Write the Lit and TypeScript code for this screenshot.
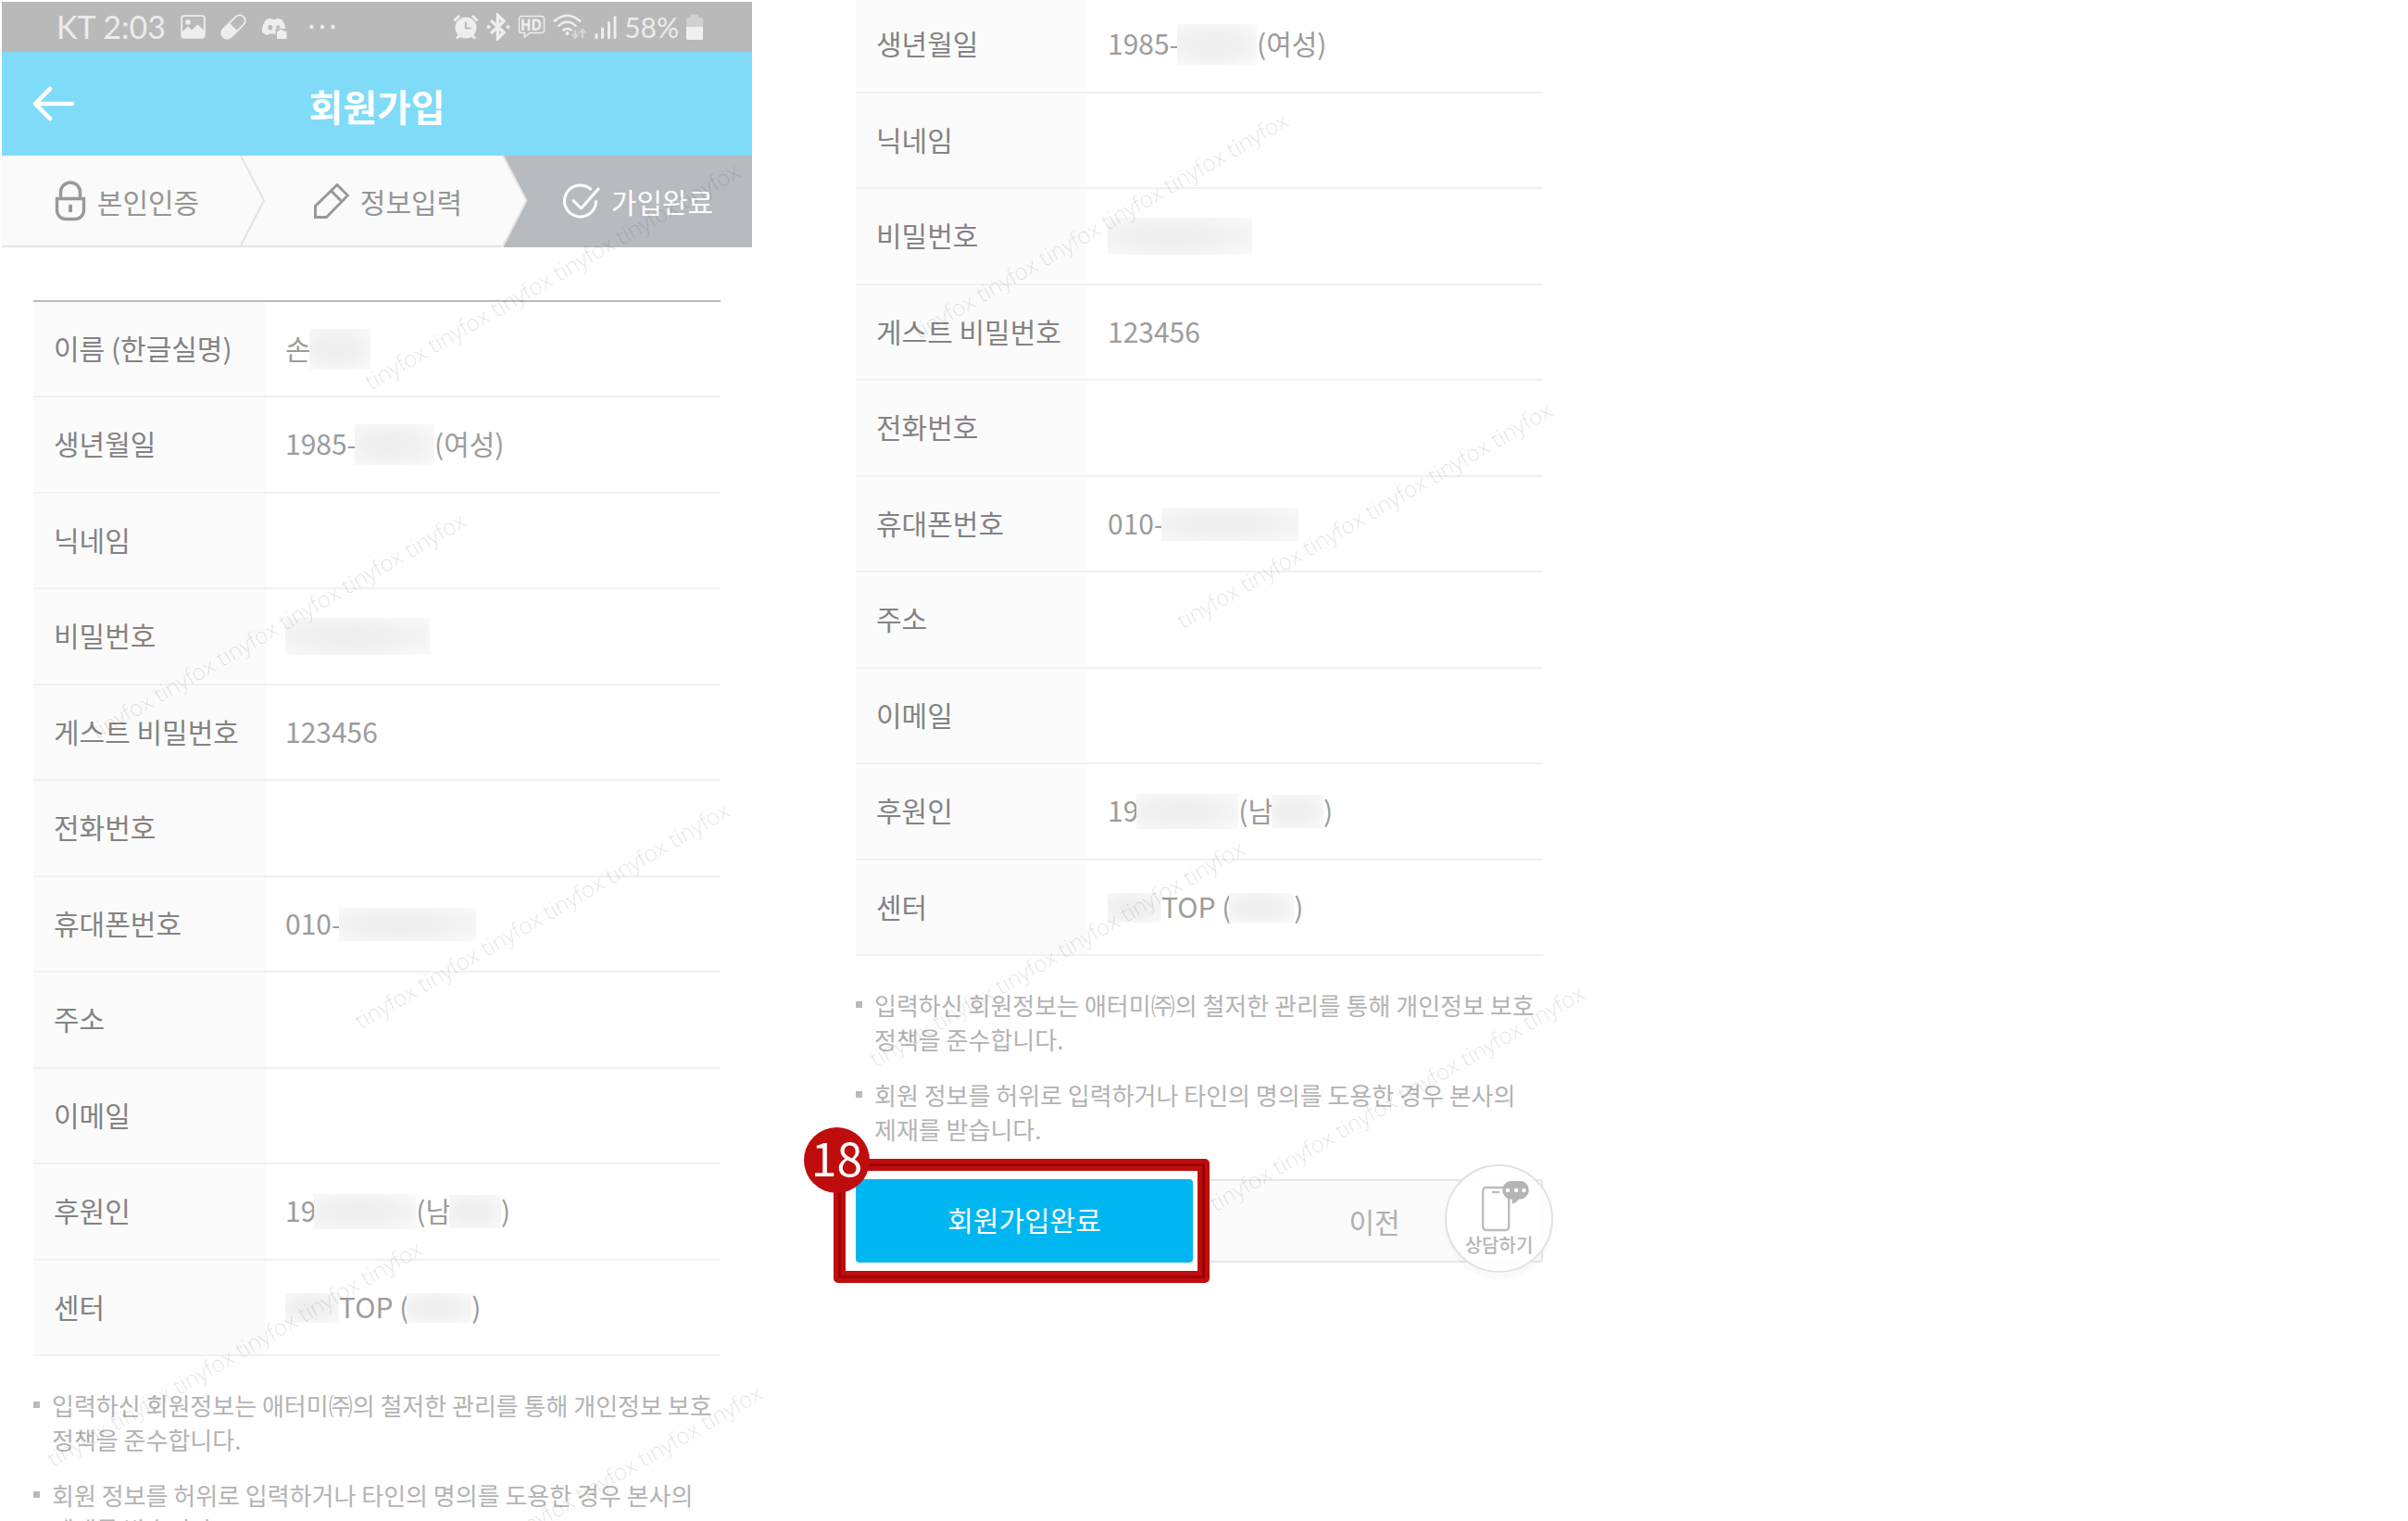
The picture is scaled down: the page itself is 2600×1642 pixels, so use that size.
import { LitElement, html, svg, css, nothing } from "lit";
import { customElement, property } from "lit/decorators.js";

/** A piece of a cell: plain text, or a masked block [width, height]. */
type Part = string | [number, number];
interface Row {
  label: string;
  value: Part[];
}

const ROWS: Row[] = [
  { label: "이름 (한글실명)", value: ["손", [66, 44]] },
  { label: "생년월일", value: ["1985-", [86, 44], "(여성)"] },
  { label: "닉네임", value: [] },
  { label: "비밀번호", value: [[156, 40]] },
  { label: "게스트 비밀번호", value: ["123456"] },
  { label: "전화번호", value: [] },
  { label: "휴대폰번호", value: ["010-", [148, 36]] },
  { label: "주소", value: [] },
  { label: "이메일", value: [] },
  { label: "후원인", value: ["19", [110, 38], "(남", [56, 36], ")"] },
  { label: "센터", value: [[58, 32], "TOP (", [70, 32], ")"] },
];

const NOTES = [
  "입력하신 회원정보는 애터미㈜의 철저한 관리를 통해 개인정보 보호 정책을 준수합니다.",
  "회원 정보를 허위로 입력하거나 타인의 명의를 도용한 경우 본사의 제재를 받습니다.",
];

const MARK = "tinyfox tinyfox tinyfox tinyfox tinyfox tinyfox";

const FONT = css`"Noto Sans CJK KR", "Noto Sans", sans-serif`;

@customElement("member-table")
class MemberTable extends LitElement {
  @property({ type: Number }) from = 0;

  static styles = css`
    :host { display: block; }
    table {
      width: 100%;
      border-collapse: separate;
      border-spacing: 0;
      table-layout: fixed;
      font: 400 30px/44px ${FONT};
    }
    .full { border-top: 2px solid #b7babf; }
    tr { height: 103px; }
    .tall { height: 104px; }
    th, td {
      box-sizing: border-box;
      padding: 0 0 4px 22px;
      border-bottom: 2px solid #f0f0f0;
      text-align: left;
      font-weight: 400;
      white-space: nowrap;
    }
    th { width: 250px; background: #fbfbfb; color: #838383; }
    td { color: #9c9c9c; }
    .value { display: flex; align-items: center; height: 44px; white-space: pre; }
    .mask {
      flex: none;
      margin: 4px 0 0 -2px;
      background: radial-gradient(ellipse at 45% 50%, #eeeeee 0%, #f1f1f1 45%, #fafafa 100%);
    }
    .mask:first-child { margin-left: 0; }
  `;

  render() {
    return html`
      <table class=${this.from === 0 ? "full" : ""}>
        <tbody>
          ${ROWS.map((row, i) =>
            i < this.from
              ? nothing
              : html`<tr class=${i % 2 ? "tall" : ""}>
                  <th scope="row">${row.label}</th>
                  <td>
                    <div class="value">${row.value.map((p) =>
                      typeof p === "string"
                        ? html`<span>${p}</span>`
                        : html`<span class="mask" style="width:${p[0]}px;height:${p[1]}px"></span>`
                    )}</div>
                  </td>
                </tr>`
          )}
        </tbody>
      </table>
    `;
  }
}

@customElement("member-notes")
class MemberNotes extends LitElement {
  static styles = css`
    :host { display: block; }
    ul {
      list-style: none;
      margin: 0;
      padding: 34px 0 0;
      display: grid;
      gap: 23px;
      font: 400 26px/37px ${FONT};
      color: #b3b3b3;
      word-break: keep-all;
    }
    li { display: grid; grid-template-columns: 7px 1fr; column-gap: 13px; }
    li::before { content: ""; width: 7px; height: 7px; margin-top: 15px; background: #b7babf; }
  `;
  render() {
    return html`<ul>${NOTES.map((n) => html`<li>${n}</li>`)}</ul>`;
  }
}

/** Diagonal watermark lines; each point is the start of a baseline. */
@customElement("water-marks")
class WaterMarks extends LitElement {
  @property({ attribute: false }) points: [number, number][] = [];

  static styles = css`
    :host { position: absolute; inset: 0; pointer-events: none; }
    span {
      position: absolute;
      font: 300 24px/24px "Open Sans", "Noto Sans", sans-serif;
      color: rgba(0, 0, 0, 0.12);
      white-space: nowrap;
      transform: translateY(-100%) rotate(-30deg);
      transform-origin: left bottom;
    }
  `;
  render() {
    return this.points.map(
      ([x, y]) => html`<span style="left:${x}px;top:${y}px">${MARK}</span>`
    );
  }
}

const lockIcon = svg`<svg width="34" height="44" viewBox="0 0 34 44" fill="none" stroke="#999" stroke-width="3.4">
  <path d="M6.5 19V12.5a10.5 10.5 0 0 1 21 0V19"/>
  <path d="M2.5 19.5H31.5V32a9.5 9.5 0 0 1-9.500 9.500H12A9.500 9.500 0 0 1 2.500 32Z"/>
  <path d="M17 27.500v5" stroke-width="4" stroke-linecap="round"/></svg>`;

const pencilIcon = svg`<svg width="38" height="40" viewBox="1 0 38 40" fill="none" stroke="#999" stroke-width="3">
  <path d="M2.500 37.500V25.500L26 2.500 37.500 14 14.500 37.500Z"/><path d="M19.500 9 31 20.500"/></svg>`;

const checkIcon = svg`<svg width="40" height="38" viewBox="0 0 40 38" fill="none" stroke="#fff" stroke-width="3" stroke-linecap="round" stroke-linejoin="round">
  <path d="M29.500 6A17 17 0 1 0 35.500 19.500"/><path d="M11 18.500 19.500 27 38 6"/></svg>`;

const leftIcons = [
  svg`<svg width="27" height="28" viewBox="0 0 27 28"><rect x="1.200" y="2.200" width="24.600" height="23.600" rx="2.500" fill="none" stroke="#eee" stroke-width="1.800"/>
    <path fill="#eee" d="M2 19 8 13.500 12 17.500 18.500 11.500 25 17.500V25H2Z"/><circle cx="8" cy="9" r="2.800" fill="#eee"/></svg>`,
  svg`<svg width="28" height="28" viewBox="0 0 28 28"><g transform="rotate(-45 14 14)"><rect x="-1.500" y="8" width="31" height="12" rx="6" fill="none" stroke="#eee" stroke-width="1.800"/>
    <path fill="#eee" d="M14 7.500H4.500a6.500 6.500 0 0 0 0 13H14Z"/></g></svg>`,
  svg`<svg width="28" height="28" viewBox="0 0 28 28"><path fill="#eee" fill-rule="evenodd" d="M5.500 6 10 4.500 11.500 6H16L17.500 4.500 22 6C24.500 9 26 12.500 26.200 16H17c-1 0-1.500.500-1.500 2v3.500H9L6.500 23 1 20C.800 14 2.500 9.500 5.500 6ZM9.800 12a2.600 2.800 0 1 0 .1 0ZM18 12.200a2.300 2.300 0 0 0-1.800 3.300h4.200A2.400 2.400 0 0 0 18 12.200Z"/>
    <path fill="#eee" d="M17 18.500h2l1-1.500h3l1 1.500h3.500V27H17Z"/></svg>`,
  svg`<svg width="30" height="28" viewBox="0 0 30 28" fill="#eee"><circle cx="2.500" cy="14" r="2.200"/><circle cx="14" cy="14" r="2.200"/><circle cx="25.500" cy="14" r="2.200"/></svg>`,
];

const rightIcons = [
  svg`<svg width="28" height="28" viewBox="0 0 28 28"><circle cx="14" cy="15" r="11.500" fill="#eee"/>
    <path d="M1.500 7.500 7 2M26.500 7.500 21 2M4 26.500 7 23.500M24 26.500 21 23.500" stroke="#eee" stroke-width="3"/>
    <path d="M14 8.500V15.500H19.500" fill="none" stroke="#b9b9b9" stroke-width="2.200"/></svg>`,
  svg`<svg width="26" height="30" viewBox="0 0 26 30"><path d="M5 8 19 21 12.500 27.500V2.500L19 9 5 22" fill="none" stroke="#eee" stroke-width="3.400"/>
    <circle cx="2.500" cy="15" r="2" fill="#eee"/><circle cx="23.500" cy="15" r="2" fill="#eee"/></svg>`,
  svg`<svg width="30" height="26" viewBox="0 0 30 26" fill="none" stroke="#eee"><path stroke-width="1.500" d="M4 1.500H26A2.500 2.500 0 0 1 28.500 4V17A2.500 2.500 0 0 1 26 19.500H13L7.500 24V19.500H4A2.500 2.500 0 0 1 1.500 17V4A2.500 2.500 0 0 1 4 1.500Z"/>
    <path stroke-width="2.600" d="M5.500 4.500V17M12 4.500V17M5.500 10.500H12M17 5.800V15.700H19.500Q24 15.500 24 10.700T19.500 5.800Z"/></svg>`,
  svg`<svg width="37" height="28" viewBox="0 0 37 28" fill="none" stroke="#eee" stroke-width="2.400"><path d="M1 8.500Q15.500-5 30 8.500M5.500 13.500Q15.500 4 25.500 13.500M10.500 18Q15.500 14 20.500 18"/>
    <circle cx="15.500" cy="21" r="2" fill="#eee" stroke="none"/><path stroke="#d4d4d4" stroke-width="2.500" d="M24 17.500V24M32 26V18"/><path fill="#d4d4d4" stroke="none" d="M19.500 22h9L24 27.500ZM27.500 20.500h9L32 15Z"/></svg>`,
  svg`<svg width="24" height="28" viewBox="0 0 24 28" stroke="#eee" stroke-width="3" stroke-linecap="round"><path d="M2 22.500V25.500M8.500 16V25.500M15.500 9.500V25.500M22 3.500V25.500"/></svg>`,
];

const batteryIcon = svg`<svg width="18" height="28" viewBox="0 0 18 28"><path fill="#d0d0d0" d="M5 0.500H13V4H16.500A1.500 1.500 0 0 1 18 5.500V14H0V5.500A1.500 1.500 0 0 1 1.500 4H5Z"/>
  <path fill="#f0f0f0" d="M0 14H18V26.500A1.500 1.500 0 0 1 16.500 28H1.500A1.500 1.500 0 0 1 0 26.500Z"/></svg>`;

const backIcon = svg`<svg width="46" height="38" viewBox="0 0 46 38" fill="none" stroke="#fff" stroke-width="4.600" stroke-linecap="round" stroke-linejoin="round"><path d="M43 19H3M19 2.800 3 19 19 35.200"/></svg>`;

const chatIcon = svg`<svg width="70" height="56" viewBox="-15 0 70 56"><rect x="2.200" y="8" width="28" height="46" rx="3.500" fill="none" stroke="#bdbdbd" stroke-width="2.400"/>
  <path d="M12 13h8" stroke="#bdbdbd" stroke-width="2.400"/>
  <path fill="#b5b5b5" d="M31 1H44A10 10 0 0 1 44 20.500H41Q37 25.500 33 25.500 34.500 23 33.500 20.500H31A10 10 0 0 1 31 1Z"/>
  <circle cx="29" cy="11" r="2.300" fill="#fff"/><circle cx="38" cy="11" r="2.300" fill="#fff"/><circle cx="46.500" cy="11" r="2.300" fill="#fff"/></svg>`;

@customElement("app-root")
class AppRoot extends LitElement {
  static styles = css`
    :host {
      display: block;
      height: 100vh;
      overflow: hidden;
      background: #fff;
      font-family: ${FONT};
    }
    .page {
      display: grid;
      grid-template-columns: minmax(0, 810fr) minmax(0, 112fr) minmax(0, 742fr) minmax(0, 934fr);
      padding-left: 2px;
      height: 100%;
    }
    .first, .second { position: relative; min-width: 0; }
    .first { padding-top: 2px; }
    .second { grid-column: 3; margin-top: -3px; }
    .status {
      display: flex;
      align-items: center;
      justify-content: space-between;
      height: 54px;
      padding: 0 53px 0 59px;
      background: #b9b9b9;
      color: #ececec;
      font: 400 34px/54px Lato, "Noto Sans", sans-serif;
    }
    .side { display: flex; align-items: center; height: 54px; }
    .side.info { gap: 16px; }
    .side.state { gap: 8px; font-size: 30px; }
    .dots { margin-left: 8px; }
    svg { display: block; flex: none; }
    .bar {
      display: grid;
      grid-template-columns: 46px 1fr 46px;
      align-items: center;
      height: 112px;
      padding: 0 33px;
      background: #80dbf9;
    }
    .bar button { padding: 0; border: 0; background: none; }
    h1 { margin: 0; padding-top: 4px; color: #fff; text-align: center; font: 700 40px/60px ${FONT}; }
    .steps {
      display: grid;
      grid-template-columns: repeat(3, 1fr);
      list-style: none;
      margin: 0;
      padding: 0;
      height: 99px;
    }
    .steps li {
      position: relative;
      box-sizing: border-box;
      display: flex;
      align-items: center;
      justify-content: center;
      gap: 12px;
      border-bottom: 2px solid #e4e4e4;
      background: #fafafa;
      color: #959595;
      font: 400 30px/44px ${FONT};
    }
    .steps li + li { padding-left: 24px; }
    .steps .done { background: #b7babf; border-color: #b7babf; color: #fff; }
    .edge { position: absolute; left: -14px; top: 0; }
    .edge.solid { left: 0; }
    .body { padding: 57px 34px 0; }
    .actions { display: grid; grid-template-columns: 1fr 1fr; gap: 14px; padding-top: 36px; }
    .actions button {
      width: 100%;
      height: 90px;
      padding: 0;
      border: 0;
      border-radius: 4px;
      font: 400 30px/44px ${FONT};
    }
    .target, .other { position: relative; height: 90px; }
    .actions .primary { position: relative; padding-bottom: 4px; background: #00b6f1; color: #fff; }
    .actions .previous { border: 2px solid #e6e6e6; background: #fbfbfb; color: #b0b0b0; }
    .frame {
      position: absolute;
      inset: -22px -18px -22px -24px;
      border: 5px solid #bf0d0e;
      border-radius: 5px;
      background: #fff;
      box-shadow: inset 0 0 0 3px #a00000, inset 0 0 0 8px #bf0d0e;
    }
    .badge {
      position: absolute;
      left: -56px;
      top: -56px;
      width: 71px;
      height: 71px;
      border-radius: 50%;
      background: #bf0d0e;
      color: #fff;
      text-align: center;
      font: 400 50px/63px ${FONT};
    }
    .over { z-index: 2; }
    .actions .chat {
      position: absolute;
      right: -11px;
      top: -16px;
      box-sizing: border-box;
      width: 117px;
      height: 117px;
      display: flex;
      flex-direction: column;
      align-items: center;
      padding: 15px 0 0;
      border: 2px solid #e2e2e2;
      border-radius: 50%;
      background: rgba(255, 255, 255, 0.85);
      box-shadow: 0 7px 2px rgba(0, 0, 0, 0.025);
      color: #b5b5b5;
      font: 500 20px/28px ${FONT};
    }
  `;

  render() {
    return html`
      <main class="page">
        <section class="first">
          <div class="status">
            <div class="side info">
              <span>KT 2:03</span>
              ${leftIcons.slice(0, 3)}
              <span class="dots">${leftIcons[3]}</span>
            </div>
            <div class="side state">${rightIcons}<span>58%</span>${batteryIcon}</div>
          </div>
          <header class="bar">
            <button type="button" aria-label="뒤로">${backIcon}</button>
            <h1>회원가입</h1>
          </header>
          <ol class="steps">
            <li>${lockIcon}<span>본인인증</span></li>
            <li>
              <svg class="edge" width="30" height="97" viewBox="0 0 30 97"><path d="M2 0 27 48.500 2 97" fill="none" stroke="#e4e4e4" stroke-width="2"/></svg>
              ${pencilIcon}<span>정보입력</span>
            </li>
            <li class="done">
              <svg class="edge solid" width="28" height="99" viewBox="0 0 28 99"><path d="M0 0H2L27 48.500 2 97V99H0Z" fill="#fafafa"/><path d="M1 0 26.500 48.500 1 98" fill="none" stroke="#e4e4e4" stroke-width="2"/></svg>
              ${checkIcon}<span>가입완료</span>
            </li>
          </ol>
          <div class="body">
            <member-table></member-table>
            <member-notes></member-notes>
          </div>
          <water-marks .points=${[[400, 424], [104, 801], [389, 1114], [57, 1587], [424, 1743]]}></water-marks>
        </section>

        <section class="second">
          <member-table from="1"></member-table>
          <member-notes></member-notes>
          <div class="actions">
            <div class="target over">
              <div class="frame"></div>
              <button type="button" class="primary">회원가입완료</button>
              <span class="badge">18</span>
            </div>
            <div class="other">
              <button type="button" class="previous">이전</button>
              <button type="button" class="chat over">${chatIcon}<span>상담하기</span></button>
            </div>
          </div>
          <water-marks .points=${[[70, 372], [355, 685], [23, 1158], [390, 1314]]}></water-marks>
        </section>
      </main>
    `;
  }
}
